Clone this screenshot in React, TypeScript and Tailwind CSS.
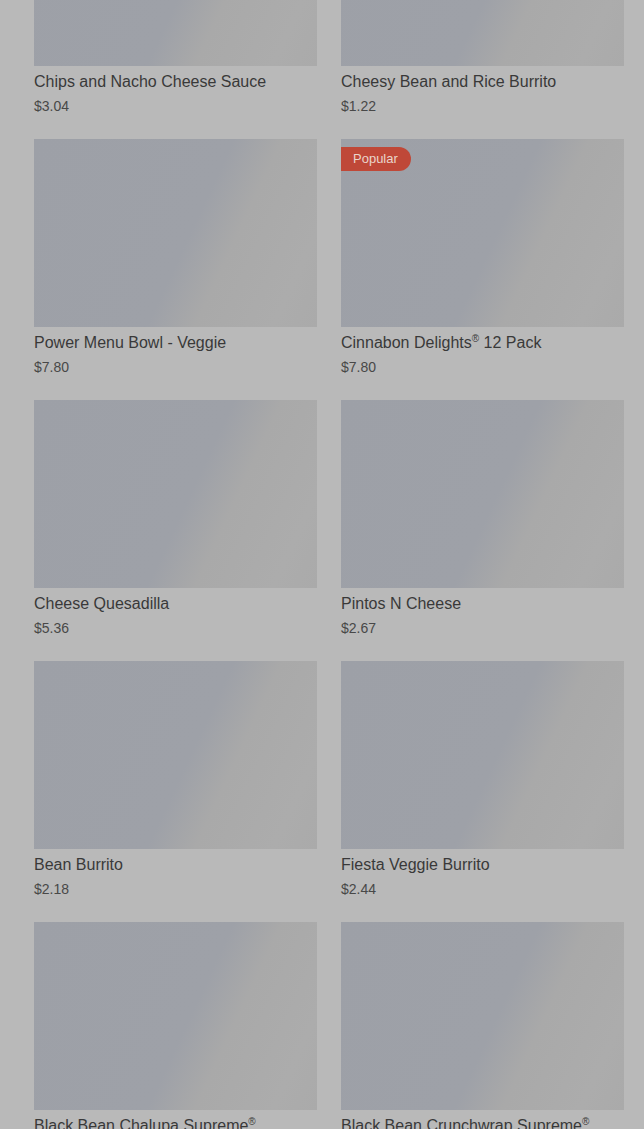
import React from "react";

type Item = {
  id: number;
  name: string;
  price: string;
  popular?: boolean;
  mark?: boolean;
  suffix?: string;
};

const items: Item[] = [
  { id: 1, name: "Chips and Nacho Cheese Sauce", price: "$3.04" },
  { id: 2, name: "Cheesy Bean and Rice Burrito", price: "$1.22" },
  { id: 3, name: "Power Menu Bowl - Veggie", price: "$7.80" },
  {
    id: 4,
    name: "Cinnabon Delights",
    price: "$7.80",
    popular: true,
    mark: true,
    suffix: " 12 Pack",
  },
  { id: 5, name: "Cheese Quesadilla", price: "$5.36" },
  { id: 6, name: "Pintos N Cheese", price: "$2.67" },
  { id: 7, name: "Bean Burrito", price: "$2.18" },
  { id: 8, name: "Fiesta Veggie Burrito", price: "$2.44" },
  { id: 9, name: "Black Bean Chalupa Supreme", price: "$4.99", mark: true },
  { id: 10, name: "Black Bean Crunchwrap Supreme", price: "$5.49", mark: true },
];

const MenuCard: React.FC<{ item: Item }> = ({ item }) => (
  <div className="flex flex-col">
    <div className="relative h-[188px] w-full bg-[linear-gradient(115deg,#9da0a7_0%,#9ea1a8_54%,#a9a9a9_67%,#acacac_88%,#aaaaaa_100%)]">
      {item.popular && (
        <span className="absolute left-0 top-2 flex h-6 items-center rounded-r-full bg-[#bf4838] pl-3 pr-[13px] text-[13px] text-[#ead5cb]">
          Popular
        </span>
      )}
    </div>
    <div className="mt-1 text-base leading-6 text-[#393939]">
      {item.name}
      {item.mark && <sup className="-top-[6px] text-[10px]">®</sup>}
      {item.suffix}
    </div>
    <div className="mt-[2px] text-sm leading-5 text-[#484848]">
      {item.price}
    </div>
  </div>
);

export default function App() {
  return (
    <div
      className="h-[1129px] overflow-hidden bg-[#b9b9b9] pl-[34px] pr-5"
      style={{ fontFamily: '"Liberation Sans", Arial, sans-serif' }}
    >
      <div className="-mt-[122px] grid grid-cols-2 gap-x-6 gap-y-[23px]">
        {items.map((item) => (
          <MenuCard key={item.id} item={item} />
        ))}
      </div>
    </div>
  );
}
